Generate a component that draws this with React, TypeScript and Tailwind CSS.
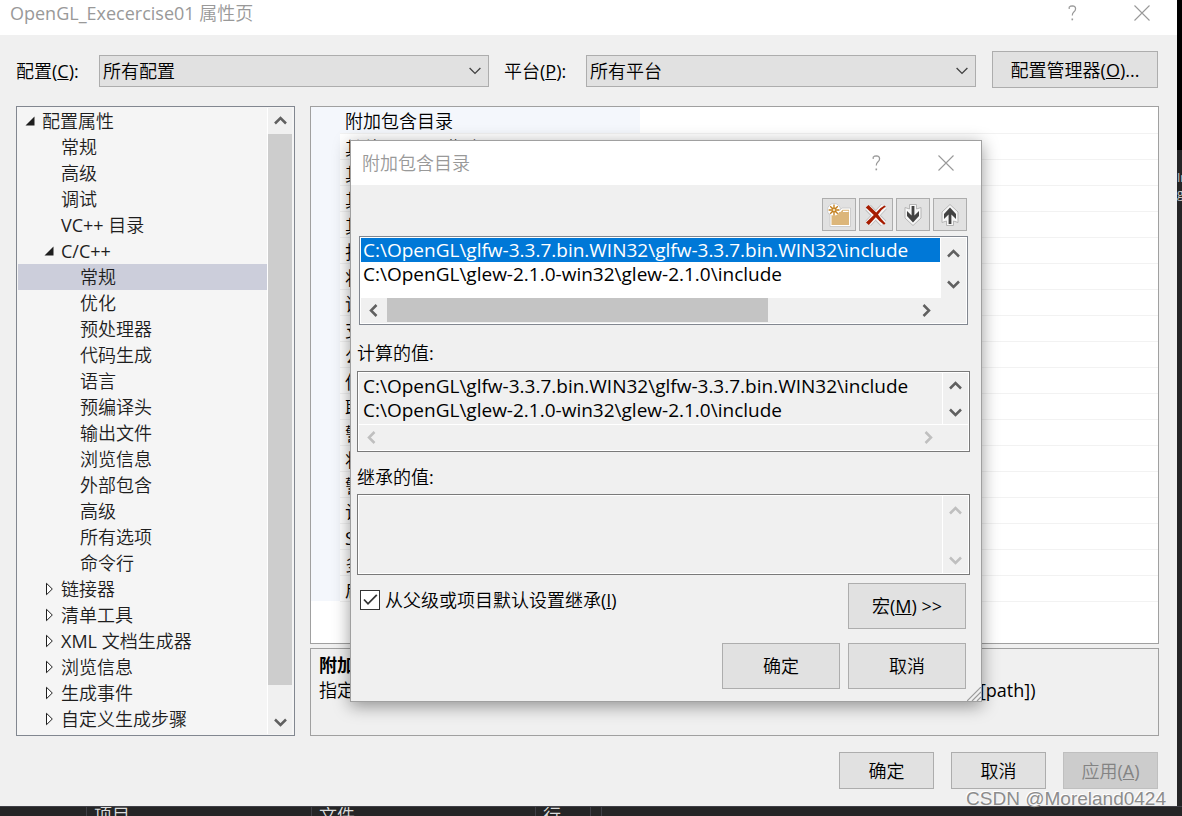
import { useState } from 'react';

type TreeItem = {
  label: string;
  level: number;
  state?: 'open' | 'closed';
};

const treeItems: TreeItem[] = [
  { label: '配置属性', level: 0, state: 'open' },
  { label: '常规', level: 1 },
  { label: '高级', level: 1 },
  { label: '调试', level: 1 },
  { label: 'VC++ 目录', level: 1 },
  { label: 'C/C++', level: 1, state: 'open' },
  { label: '常规', level: 2 },
  { label: '优化', level: 2 },
  { label: '预处理器', level: 2 },
  { label: '代码生成', level: 2 },
  { label: '语言', level: 2 },
  { label: '预编译头', level: 2 },
  { label: '输出文件', level: 2 },
  { label: '浏览信息', level: 2 },
  { label: '外部包含', level: 2 },
  { label: '高级', level: 2 },
  { label: '所有选项', level: 2 },
  { label: '命令行', level: 2 },
  { label: '链接器', level: 1, state: 'closed' },
  { label: '清单工具', level: 1, state: 'closed' },
  { label: 'XML 文档生成器', level: 1, state: 'closed' },
  { label: '浏览信息', level: 1, state: 'closed' },
  { label: '生成事件', level: 1, state: 'closed' },
  { label: '自定义生成步骤', level: 1, state: 'closed' },
];

const properties = [
  '附加包含目录',
  '其他 #using 指令',
  '其他 BMI 目录',
  '其他模块依赖项',
  '其他标头单元依赖项',
  '扫描源以查找模块依赖关系',
  '将包含转换为导入',
  '调试信息格式',
  '支持仅我的代码调试',
  '公共语言运行时支持',
  '使用 Windows 运行时扩展',
  '取消显示启动版权标志',
  '警告等级',
  '将警告视为错误',
  '警告版本',
  '诊断格式',
  'SDL 检查',
  '多处理器编译',
  '启用地址擦除系统',
];

const directories = [
  'C:\\OpenGL\\glfw-3.3.7.bin.WIN32\\glfw-3.3.7.bin.WIN32\\include',
  'C:\\OpenGL\\glew-2.1.0-win32\\glew-2.1.0\\include',
];

const levelPadding = ['pl-1', 'pl-[23px]', 'pl-[42px]'];

const arrowPaths = {
  up: 'M1 9.5 6.5 4 12 9.5',
  down: 'M1 3.5 6.5 9 12 3.5',
  left: 'M9.5 1 4 6.5 9.5 12',
  right: 'M3.5 1 9 6.5 3.5 12',
};

function ScrollArrow({ dir, disabled }: { dir: keyof typeof arrowPaths; disabled?: boolean }) {
  return (
    <button
      type="button"
      aria-label={dir}
      disabled={disabled}
      className="flex h-6 w-6 shrink-0 items-center justify-center"
    >
      <svg width="13" height="13" viewBox="0 0 13 13" fill="none" stroke={disabled ? '#bfbfbf' : '#606060'} strokeWidth="2.5">
        <path d={arrowPaths[dir]} />
      </svg>
    </button>
  );
}

function Expander({ state }: { state?: 'open' | 'closed' }) {
  return (
    <span className="flex w-5 shrink-0 items-center pl-[3px]">
      {state === 'open' && (
        <svg width="10" height="10" viewBox="0 0 10 10">
          <path d="M9.5 0.5V9.5H0.5Z" fill="#1e1e1e" />
        </svg>
      )}
      {state === 'closed' && (
        <svg width="10" height="14" viewBox="0 0 10 14">
          <path d="M2.5 1.3V12.7L8.3 7Z" fill="#fff" stroke="#1e1e1e" />
        </svg>
      )}
    </span>
  );
}

function TitleButtons() {
  return (
    <div className="flex items-center text-[#999999]">
      <button type="button" aria-label="帮助" className="flex w-[70px] justify-center">
        <svg width="9" height="16" viewBox="0 0 9 16" fill="none" stroke="currentColor" strokeWidth="1.2">
          <path d="M1.2 4V2.2Q2.4 0.9 4.4 0.9Q7.6 1 7.6 3.8Q7.6 5.6 5.8 7Q4.3 8.2 4.3 10.6" />
          <path d="M3.5 14.4H5.1" strokeWidth="1.8" />
        </svg>
      </button>
      <button type="button" aria-label="关闭" className="flex w-[70px] justify-center">
        <svg width="16" height="16" viewBox="0 0 16 16" fill="none" stroke="currentColor" strokeWidth="1.1">
          <path d="M0.5 0.5 15.5 15.5M15.5 0.5 0.5 15.5" />
        </svg>
      </button>
    </div>
  );
}

function ComboBox({ id, value }: { id: string; value: string }) {
  return (
    <div className="relative min-w-0 flex-1">
      <select
        id={id}
        defaultValue={value}
        className="block h-8 w-full appearance-none border border-[#adadad] bg-[#e1e1e1] pl-[3px] leading-6 outline-none"
      >
        <option>{value}</option>
      </select>
      <svg className="pointer-events-none absolute top-3 right-2" width="12" height="8" viewBox="0 0 12 8" fill="none" stroke="#404040" strokeWidth="1.3">
        <path d="M0.6 1 6 6.4 11.4 1" />
      </svg>
    </div>
  );
}

function NewFolderIcon() {
  return (
    <svg width="24" height="24" viewBox="0 0 24 24">
      <circle cx="7" cy="7" r="6.5" fill="#fff" stroke="#c4c4c4" strokeWidth="0.8" />
      <path d="M3 7H13L15 5H23.5V23.5H3Z" fill="#fff" stroke="#c4c4c4" strokeWidth="0.8" />
      <path d="M4.5 9H13.5L15.5 6.7H22V22H4.5Z" fill="#dcb67a" />
      <path d="M16 8.4H21.5" stroke="#fff" strokeWidth="1.2" />
      <circle cx="7" cy="7" r="5.6" fill="#fff" />
      <g stroke="#c27d1a" strokeWidth="1.3">
        <path d="M7 1.6V4.6M7 9.4V12.4M1.6 7H4.6M9.4 7H12.4M3.2 3.2 5.2 5.2M8.8 8.8 10.8 10.8M10.8 3.2 8.8 5.2M5.2 8.8 3.2 10.8" />
        <circle cx="7" cy="7" r="2" fill="#f3dcb4" />
      </g>
    </svg>
  );
}

function DeleteIcon() {
  return (
    <svg width="24" height="24" viewBox="0 0 24 24" fill="none">
      <path d="M4 4.5 19.5 20.5M20 3.5 4 20.5" stroke="#bdbdbd" strokeWidth="7.6" />
      <path d="M4 4.5 19.5 20.5M20 3.5 4 20.5" stroke="#f7f7f7" strokeWidth="6" />
      <path d="M1.8 4.5 4.5 2 12.2 9.6Q16 4.5 20.5 2.5L21.8 3.6Q17.5 6.5 14 11.5Q17 16 21.5 20.5L20 21.8Q15.5 18.5 11.8 14.2L4.8 22 2 19.4 9.8 12Z" fill="#a61c00" />
    </svg>
  );
}

function ArrowIcon({ flip }: { flip?: boolean }) {
  return (
    <svg width="24" height="24" viewBox="0 0 24 24" className={flip ? 'rotate-180' : ''}>
      <path
        d="M8.5 1.5H15.5V6L20 4.5V15L12 22.5 4 15V4.5L8.5 6Z"
        fill="#f7f7f7"
        stroke="#b5b5b5"
      />
      <path d="M10.6 3H13.4V12.6L18 8V13L12 19.4 6 13V8L10.6 12.6Z" fill="#424242" />
    </svg>
  );
}

function ToolButton({ label, children }: { label: string; children: React.ReactNode }) {
  return (
    <button
      type="button"
      aria-label={label}
      className="flex h-[33px] w-[34px] items-center justify-center border border-[#adadad] bg-[#e1e1e1]"
    >
      {children}
    </button>
  );
}

function PropertyTree() {
  const [selected, setSelected] = useState(6);

  return (
    <div className="flex w-[279px] shrink-0 border border-[#828790] bg-[#f5f5f5] p-px text-[#1e1e1e]">
      <ul className="min-w-0 flex-1">
        {treeItems.map((item, i) => (
          <li key={i}>
            <button
              type="button"
              onClick={() => setSelected(i)}
              className={`flex h-[26px] w-full text-left leading-[26px] whitespace-nowrap ${levelPadding[item.level]} ${
                i === selected ? 'bg-[#cccedb]' : ''
              }`}
            >
              <Expander state={item.state} />
              {item.label}
            </button>
          </li>
        ))}
      </ul>
      <div className="mr-px flex w-[25px] flex-col border-l border-white bg-[#f0f0f0]">
        <ScrollArrow dir="up" />
        <div className="mt-[2px] h-[551px] bg-[#cdcdcd]" />
        <div className="mt-auto">
          <ScrollArrow dir="down" />
        </div>
      </div>
    </div>
  );
}

function IncludeDialog() {
  const [inherit, setInherit] = useState(true);
  const bigButton = 'h-[46px] w-[118px] border border-[#adadad] bg-[#e1e1e1]';

  return (
    <section
      role="dialog"
      aria-label="附加包含目录"
      className="absolute top-[140px] left-[350px] w-[632px] border border-[#a0a0a0] bg-[#f0f0f0] shadow-[0_4px_16px_rgba(0,0,0,0.4)]"
    >
      <header className="flex h-11 items-center justify-between bg-white pl-[11px]">
        <h2 className="text-[#999999]">附加包含目录</h2>
        <TitleButtons />
      </header>

      <div className="pt-[13px] pr-[11px] pl-1.5">
        <div className="mr-[3px] flex justify-end gap-[3px]">
          <ToolButton label="新行"><NewFolderIcon /></ToolButton>
          <ToolButton label="删除行"><DeleteIcon /></ToolButton>
          <ToolButton label="下移"><ArrowIcon /></ToolButton>
          <ToolButton label="上移"><ArrowIcon flip /></ToolButton>
        </div>

        <div className="mt-[5px] mr-0.5 ml-0.5 border border-[#828790] bg-white p-px">
          <div className="flex">
            <ul role="listbox" aria-label="附加包含目录" className="h-[60px] min-w-0 flex-1">
              {directories.map((dir, i) => (
                <li
                  key={dir}
                  role="option"
                  aria-selected={i === 0}
                  className={`h-6 pl-0.5 font-['Open_Sans',sans-serif] text-[19px] leading-6 whitespace-nowrap ${
                    i === 0 ? 'bg-[#0078d7] text-white' : ''
                  }`}
                >
                  {dir}
                </li>
              ))}
            </ul>
            <div className="ml-px flex w-[25px] flex-col justify-between bg-[#f0f0f0] pt-[3px] pb-0.5">
              <ScrollArrow dir="up" />
              <ScrollArrow dir="down" />
            </div>
          </div>
          <div className="flex bg-[#f0f0f0] pr-[28px] pb-px">
            <ScrollArrow dir="left" />
            <div className="ml-0.5 h-6 w-[381px] bg-[#c4c4c4]" />
            <div className="ml-auto">
              <ScrollArrow dir="right" />
            </div>
          </div>
        </div>

        <label htmlFor="evaluated" className="mt-4 block leading-6">计算的值:</label>
        <div className="mt-1.5 border border-[#7a7a7a] bg-[#f0f0f0]">
          <div className="border border-white">
            <div className="flex border-b border-white">
              <textarea
                id="evaluated"
                readOnly
                wrap="off"
                value={directories.join('\n')}
                className="h-[51px] min-w-0 flex-1 resize-none overflow-hidden border-r border-white pt-px pl-1 font-['Open_Sans',sans-serif] text-[19px] leading-6 outline-none"
              />
              <div className="flex w-[25px] flex-col justify-between">
                <ScrollArrow dir="up" />
                <ScrollArrow dir="down" />
              </div>
            </div>
            <div className="flex justify-between pr-[28px] pb-px">
              <ScrollArrow dir="left" disabled />
              <ScrollArrow dir="right" disabled />
            </div>
          </div>
        </div>

        <label htmlFor="inherited" className="mt-[13px] block leading-6">继承的值:</label>
        <div className="mt-[5px] border border-[#7a7a7a] bg-[#f0f0f0]">
          <div className="flex border border-white">
            <textarea
              id="inherited"
              readOnly
              className="h-[77px] min-w-0 flex-1 resize-none overflow-hidden border-r border-white px-1 leading-6 outline-none"
            />
            <div className="flex w-[25px] flex-col justify-between pt-0.5 pb-px">
              <ScrollArrow dir="up" disabled />
              <ScrollArrow dir="down" disabled />
            </div>
          </div>
        </div>

        <div className="mt-2 mr-1 flex items-start justify-between">
          <label className="relative flex items-center gap-[5px] pt-[5px] pl-[3px] leading-6">
            <input
              type="checkbox"
              checked={inherit}
              onChange={(e) => setInherit(e.target.checked)}
              className="h-5 w-5 appearance-none border border-[#333333] bg-white"
            />
            {inherit && (
              <svg className="pointer-events-none absolute top-[10px] left-1.5" width="15" height="13" viewBox="0 0 15 13" fill="none" stroke="#333" strokeWidth="1.8">
                <path d="M1 6.5 5 10.8 13.8 1.8" />
              </svg>
            )}
            <span>从父级或项目默认设置继承(<u>I</u>)</span>
          </label>
          <button type="button" className={bigButton}>宏(<u>M</u>) &gt;&gt;</button>
        </div>
        <div className="mt-[14px] mr-1 mb-3 flex justify-end gap-2">
          <button type="button" className={bigButton}>确定</button>
          <button type="button" className={bigButton}>取消</button>
        </div>
      </div>

      <svg className="absolute right-0 bottom-0" width="14" height="14" viewBox="0 0 14 14" stroke="#9a9a9a" strokeWidth="1.2">
        <path d="M0 14 14 0M5 14 14 5M10 14 14 10" />
      </svg>
    </section>
  );
}

export default function App() {
  const footerButton = 'h-[37px] w-[95px] border border-[#adadad] bg-[#e1e1e1]';

  return (
    <div className="relative flex h-screen flex-col overflow-hidden bg-[#1f1f1f] font-['Open_Sans','Noto_Sans_CJK_SC_DemiLight','Noto_Sans_CJK_SC',sans-serif] text-[18px] leading-6 text-black">
      <div className="flex min-h-0 flex-1">
        <main className="flex min-w-0 flex-1 flex-col bg-[#f0f0f0]">
          <header className="flex h-[35px] items-start justify-between bg-white pl-2.5">
            <h1 className="leading-[26px] text-[#999999]">OpenGL_Execercise01 属性页</h1>
            <div className="pt-[5px]">
              <TitleButtons />
            </div>
          </header>

          <div className="flex items-start pt-4 pr-[19px] pb-[18px] pl-4">
            <label htmlFor="configuration" className="w-[83px] shrink-0 pt-2">配置(<u>C</u>):</label>
            <div className="flex flex-1 pt-1">
              <ComboBox id="configuration" value="所有配置" />
            </div>
            <label htmlFor="platform" className="ml-[15px] w-[82px] shrink-0 pt-2">平台(<u>P</u>):</label>
            <div className="flex flex-1 pt-1">
              <ComboBox id="platform" value="所有平台" />
            </div>
            <button type="button" className="ml-4 h-[37px] w-[166px] border border-[#adadad] bg-[#e1e1e1]">
              配置管理器(<u>O</u>)...
            </button>
          </div>

          <div className="flex min-h-0 flex-1 gap-[15px] pr-[18px] pl-4">
            <PropertyTree />
            <div className="flex min-w-0 flex-1 flex-col gap-1">
              <div className="min-h-0 flex-1 border border-[#a0a0a0] bg-white">
                <table className="w-full table-fixed border-collapse">
                  <tbody>
                    {properties.map((name, i) => (
                      <tr key={name} className="h-[26px]">
                        <td className="w-[29px] bg-[#f4f7fc] p-0" />
                        <th
                          className={`w-[300px] truncate border-b border-[#f2f2f2] p-0 pt-[3px] pl-[5px] text-left leading-[22px] font-normal ${
                            i === 0 ? 'bg-[#f4f7fc]' : ''
                          }`}
                        >
                          {name}
                        </th>
                        <td className="border-b border-[#f2f2f2] p-0" />
                      </tr>
                    ))}
                  </tbody>
                </table>
              </div>
              <div className="h-[88px] border border-[#a0a0a0] px-2 pt-0.5">
                <p className="font-['Noto_Sans_CJK_SC',sans-serif] leading-[26px] font-bold">附加包含目录</p>
                <p className="leading-[26px] whitespace-nowrap">
                  指定一个或多个要添加到包含路径的目录；当目录不止一个时，请用分号分隔。&nbsp;&nbsp;&nbsp;(/I[path])
                </p>
              </div>
            </div>
          </div>

          <footer className="flex justify-end gap-[17px] pt-4 pr-[19px] pb-[17px]">
            <button type="button" className={footerButton}>确定</button>
            <button type="button" className={footerButton}>取消</button>
            <button type="button" disabled className="h-[37px] w-[95px] border border-[#bfbfbf] bg-[#cccccc] text-[#838383]">
              应用(<u>A</u>)
            </button>
          </footer>
        </main>
        <aside className="flex w-[5px] flex-col overflow-hidden bg-[#252526]">
          <div className="h-[150px] bg-black" />
          <div className="mt-5 text-xs leading-4 text-[#c8c8c8]">In</div>
          <div className="text-xs leading-4 text-[#c8c8c8]">g</div>
        </aside>
      </div>

      <div className="flex h-[10px] overflow-hidden border-t border-[#3f3f46] bg-[#252526] leading-4 text-[#dcdcdc]">
        <span className="ml-[86px] w-[225px] border-l border-[#3f3f46] pl-[7px]">项目</span>
        <span className="w-56 border-l border-[#3f3f46] pl-[7px]">文件</span>
        <span className="w-[55px] border-l border-[#3f3f46] pl-[7px]">行</span>
        <span className="w-3 border-x border-[#3f3f46]" />
      </div>

      <IncludeDialog />

      <div className="absolute right-4 bottom-[5px] font-['Liberation_Sans',sans-serif] text-[19px] leading-6 text-[#8c8c8c] [text-shadow:-1px_-1px_0_#fff]">
        CSDN @Moreland0424
      </div>
    </div>
  );
}
